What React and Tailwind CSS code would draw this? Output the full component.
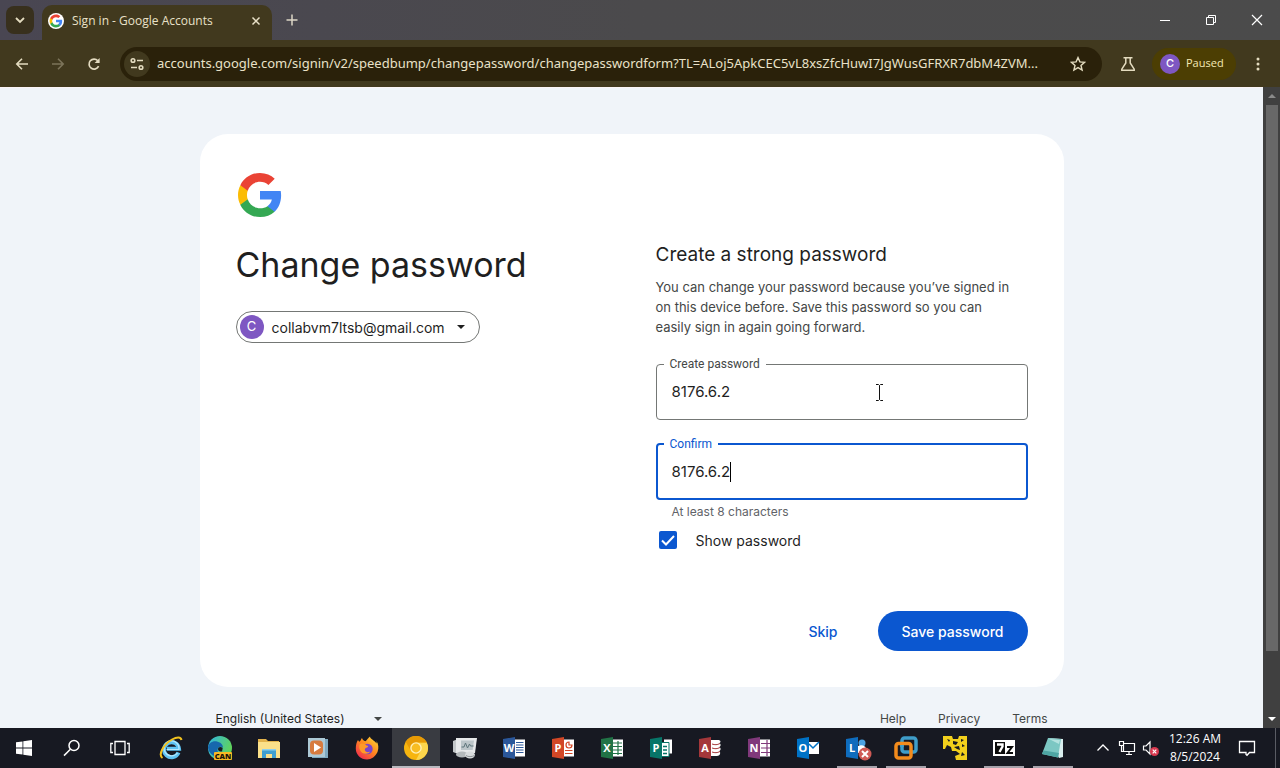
import React from "react";

const ui = "font-['Open_Sans','Noto_Sans',sans-serif]";

function GoogleG({ className }) {
  return (
    <svg viewBox="0 0 24 24" className={className} aria-hidden="true">
      <path fill="#4285F4" d="M22.56 12.25c0-.78-.07-1.53-.2-2.25H12v4.26h5.92c-.26 1.37-1.04 2.53-2.21 3.31v2.77h3.57c2.08-1.92 3.28-4.74 3.28-8.09z" />
      <path fill="#34A853" d="M12 23c2.97 0 5.46-.98 7.28-2.66l-3.57-2.77c-.98.66-2.23 1.06-3.71 1.06-2.86 0-5.29-1.93-6.16-4.53H2.18v2.84C3.99 20.53 7.7 23 12 23z" />
      <path fill="#FBBC05" d="M5.84 14.09c-.22-.66-.35-1.36-.35-2.09s.13-1.43.35-2.09V7.07H2.18C1.43 8.55 1 10.22 1 12s.43 3.45 1.18 4.93l2.85-2.22.81-.62z" />
      <path fill="#EA4335" d="M12 5.38c1.62 0 3.06.56 4.21 1.64l3.15-3.15C17.45 2.09 14.97 1 12 1 7.7 1 3.99 3.47 2.18 7.07l3.66 2.84c.87-2.6 3.3-4.53 6.16-4.53z" />
    </svg>
  );
}

function Line({ size, children, className = "", width = 1.5, label }) {
  return (
    <svg
      viewBox={`0 0 ${size} ${size}`}
      width={size}
      height={size}
      fill="none"
      stroke="currentColor"
      strokeWidth={width}
      className={`shrink-0 ${className}`}
      aria-label={label}
    >
      {children}
    </svg>
  );
}

function TabStrip() {
  return (
    <header className="flex h-10 shrink-0 items-end bg-linear-to-r from-[#494652] via-[#4b4a4c] to-[#4b4b4b]">
      <button aria-label="Search tabs" className="mb-1.5 ml-1.5 flex size-7 items-center justify-center rounded-lg bg-[#38301d] text-[#e4dcc0]">
        <Line size={12} width={1.8}><path d="M2 4l4 4 4-4" /></Line>
      </button>
      <div className="relative ml-2 flex h-[35px] w-[230px] items-center rounded-t-[10px] bg-[#41391e] pb-1 text-[#e9e1c8]">
        <span className="ml-1.5 flex size-4 items-center justify-center rounded-full bg-white">
          <GoogleG className="size-3.5" />
        </span>
        <span className={`ml-2 grow truncate text-[12px] ${ui}`}>Sign in - Google Accounts</span>
        <button aria-label="Close tab" className="mr-2.5">
          <Line size={12}><path d="M2.5 2.5l7 7M9.5 2.5l-7 7" /></Line>
        </button>
      </div>
      <button aria-label="New tab" className="mb-3.5 ml-3.5 text-[#ddd6c6]">
        <Line size={12}><path d="M6 .5v11M.5 6h11" /></Line>
      </button>
      <div className="ml-auto flex self-stretch text-white">
        <button aria-label="Minimize" className="flex w-[46px] items-center justify-center">
          <Line size={12} width={1}><path d="M1 6.5h10" /></Line>
        </button>
        <button aria-label="Restore" className="flex w-[46px] items-center justify-center">
          <Line size={12} width={1}><path d="M1.5 3.5h7v7h-7zM3.5 3.5v-2h7v7h-2" /></Line>
        </button>
        <button aria-label="Close" className="flex w-[46px] items-center justify-center">
          <Line size={12} width={1.2}><path d="M1 1l10 10M11 1L1 11" /></Line>
        </button>
      </div>
    </header>
  );
}

function Toolbar() {
  return (
    <nav className={`flex h-[47px] shrink-0 items-center bg-[#41391e] text-[#e4dcc0] ${ui}`}>
      <button aria-label="Back" className="ml-3.5">
        <Line size={16} width={1.6}><path d="M14 8H3M8 2.8L2.8 8 8 13.2" /></Line>
      </button>
      <button aria-label="Forward" className="ml-5 text-[#7c745a]">
        <Line size={16} width={1.6}><path d="M2 8h11M8 2.8L13.2 8 8 13.2" /></Line>
      </button>
      <button aria-label="Reload" className="ml-5">
        <Line size={16} width={1.7}>
          <path d="M12.6 10.2A5 5 0 1 1 11.8 4.7" />
          <path d="M13.6 2v5H8.6z" fill="currentColor" stroke="none" />
        </Line>
      </button>
      <div className="ml-4.5 flex h-[34px] min-w-0 grow items-center rounded-full bg-[#2a210a]">
        <button aria-label="View site information" className="ml-1 flex size-[26px] shrink-0 items-center justify-center rounded-full bg-[#41391e]">
          <Line size={16} width={1.6}>
            <circle cx="4" cy="4.5" r="1.8" />
            <path d="M8 4.5h6M2 11.5h6" />
            <circle cx="12" cy="11.5" r="1.8" />
          </Line>
        </button>
        <input
          aria-label="Address"
          readOnly
          className="ml-[7px] min-w-0 grow bg-transparent font-['Noto_Sans',sans-serif] text-[13px] text-[#e9e1c8] outline-none"
          value="accounts.google.com/signin/v2/speedbump/changepassword/changepasswordform?TL=ALoj5ApkCEC5vL8xsZfcHuwI7JgWusGFRXR7dbM4ZVM..."
        />
        <button aria-label="Bookmark" className="mr-4 ml-2">
          <Line size={16} width={1.4}><path d="M8 1.6l1.9 4.3 4.7.4-3.6 3.1 1.1 4.6L8 11.6 3.9 14 5 9.4 1.4 6.3l4.7-.4z" /></Line>
        </button>
      </div>
      <button aria-label="Chrome Labs" className="ml-4.5">
        <Line size={16} width={1.5}><path d="M3.5 1.8h9M5.8 2v5L1.8 13.2v1h12.4v-1L10.2 7V2" /></Line>
      </button>
      <button className="ml-4 flex h-8 w-[84px] shrink-0 items-center gap-1.5 rounded-full bg-[#4c3e03] pl-2 text-[11px] font-medium text-[#f4e9b4]">
        <span className="flex size-5 items-center justify-center rounded-full bg-[#7e57c2] font-['Inter',sans-serif] text-[11px] text-white">C</span>
        Paused
      </button>
      <button aria-label="Menu" className="mr-3.5 ml-3.5">
        <Line size={16} width={0}>
          <g fill="currentColor">
            <circle cx="8" cy="3" r="1.5" /><circle cx="8" cy="8" r="1.5" /><circle cx="8" cy="13" r="1.5" />
          </g>
        </Line>
      </button>
    </nav>
  );
}

function Caret({ className }) {
  return (
    <svg viewBox="0 0 8 4" className={`h-1 w-2 shrink-0 ${className}`} fill="currentColor" aria-hidden="true">
      <path d="M0 0h8L4 4z" />
    </svg>
  );
}

function Field({ id, label, focused, children }) {
  return (
    <fieldset
      className={
        focused
          ? "relative h-16 rounded-sm border-2 border-[#0b57d0] px-3.5"
          : "relative h-16 rounded-sm border border-[#747775] px-[15px]"
      }
    >
      <legend className={focused ? "-ml-2 h-4 px-1.5 text-[#0b57d0]" : "-ml-2 h-4 px-1.5 text-[#444746]"}>
        <label htmlFor={id} className="block font-['Roboto',sans-serif] text-[12px] leading-4">{label}</label>
      </legend>
      <input
        id={id}
        type="text"
        defaultValue="8176.6.2"
        className="block h-[38px] w-full bg-transparent text-[15px] text-[#1f1f1f] outline-none"
      />
      {children}
    </fieldset>
  );
}

function SignInCard() {
  return (
    <section className="flex min-h-[553px] w-full flex-col rounded-[28px] bg-white p-9 pt-[37px]">
      <GoogleG className="size-12" />
      <div className="mt-6 grid grow grid-cols-2 gap-12">
        <div>
          <h1 className="text-[34px] leading-11 text-[#1f1f1f]">Change password</h1>
          <button className="mt-6 flex h-8 items-center rounded-full border border-[#747775] pr-3.5 pl-[3px] text-[14px] text-[#1f1f1f]">
            <span className="flex size-6 items-center justify-center rounded-full bg-[#7e57c2] text-[13px] text-white">C</span>
            <span className="ml-2">collabvm7ltsb@gmail.com</span>
            <Caret className="ml-3" />
          </button>
        </div>
        <form className="flex flex-col" onSubmit={(e) => e.preventDefault()}>
          <h2 className="text-[19px] leading-6 text-[#1f1f1f]">Create a strong password</h2>
          <p className="mt-2.5 pr-4 text-[13px] leading-5 text-[#444746]">
            You can change your password because you’ve signed in on this device before. Save this password so you can easily sign in again going forward.
          </p>
          <div className="mt-[19px] flex flex-col gap-4">
            <Field id="create" label="Create password">
              <svg viewBox="0 0 9 17" className="absolute top-3 left-[218px] h-[17px] w-[9px]" fill="none" stroke="#111" aria-hidden="true">
                <path d="M1 .5h2.5l1 1 1-1H8M4.500 1.500v14M1 16.500h2.500l1-1 1 1H8" />
              </svg>
            </Field>
            <Field id="confirm" label="Confirm" focused>
              <span className="absolute top-2.5 left-[72px] h-5 w-px bg-black" />
            </Field>
          </div>
          <p className="mt-1 ml-4 text-[12px] leading-4 text-[#5f6368]">At least 8 characters</p>
          <label className="mt-2.5 ml-[3px] flex h-5 items-center gap-[19px] text-[14px] text-[#1f1f1f]">
            <span className="relative flex size-[18px]">
              <input type="checkbox" defaultChecked className="size-[18px] appearance-none rounded-xs bg-[#0b57d0]" />
              <svg viewBox="0 0 18 18" className="absolute inset-0" fill="none" stroke="white" strokeWidth="2" aria-hidden="true">
                <path d="M3 9.500l4 4 8-8.500" />
              </svg>
            </span>
            Show password
          </label>
          <div className="mt-auto flex justify-end gap-4 text-[14px] font-medium">
            <button type="button" className="h-10 px-6 text-[#0b57d0]">Skip</button>
            <button type="submit" className="h-10 rounded-full bg-[#0b57d0] px-6 text-white">Save password</button>
          </div>
        </form>
      </div>
    </section>
  );
}

function PageFooter() {
  return (
    <footer className="mt-6 flex items-center justify-between px-4 text-[12px] leading-4 text-[#444746]">
      <div className="relative flex items-center">
        <select aria-label="Language" className="w-[168px] appearance-none bg-transparent text-[#1f1f1f]">
          <option>English (United States)</option>
        </select>
        <Caret className="absolute right-0.5" />
      </div>
      <div className="flex gap-8">
        <a href="#help">Help</a>
        <a href="#privacy">Privacy</a>
        <a href="#terms">Terms</a>
      </div>
    </footer>
  );
}

function OfficeIcon({ color, letter, children }) {
  return (
    <svg viewBox="0 0 24 24" className="size-6" aria-hidden="true">
      {children}
      <path fill={color} d="M1 3L13 1v22L1 21z" />
      <text x="7" y="16" textAnchor="middle" fontSize="11" fontWeight="700" fill="white" fontFamily="Open Sans, sans-serif">{letter}</text>
    </svg>
  );
}

const page = (color, d) => (
  <>
    <path fill="white" d="M12 3.500h11v17H12z" />
    <path stroke={color} strokeWidth="1.200" fill="none" d={d} />
  </>
);

const apps = [
  {
    name: "Internet Explorer",
    icon: (
      <svg viewBox="0 0 24 24" className="size-6" fill="none">
        <path d="M19.500 16.500A7.500 7.500 0 1 1 20 12.800H8" stroke="#5ec3f2" strokeWidth="4" />
        <path d="M18.500 17A7.500 7.500 0 1 1 20 13.500H7.500" stroke="#b5e8fc" strokeWidth="1.200" />
        <path d="M3.500 22C-1 19 4 8.500 13 3.500 18 .8 22 .8 22.500 4" stroke="#f2c21f" strokeWidth="2" />
      </svg>
    ),
  },
  {
    name: "Edge Canary",
    icon: (
      <svg viewBox="0 0 24 24" className="size-6">
        <defs>
          <linearGradient id="edge" x1="0" y1="0" x2="1" y2="0.400">
            <stop offset="0" stopColor="#2fb4e6" /><stop offset="1" stopColor="#5fd35c" />
          </linearGradient>
        </defs>
        <circle cx="12" cy="12" r="12" fill="url(#edge)" />
        <path fill="#1767ad" d="M0 12c0-5 5-7.500 9-6.500 4 .8 6 3.500 6 6.500-2-2.500-5.500-1-5.500 2 0 4 5 6 9 5.500A12 12 0 0 1 0 12z" />
        <path fill="#171921" d="M10 13c0-2 3-3 4.500-1 .7 1-.8 2-.2 3.200-2.500 1-4.300-.4-4.300-2.200z" />
        <rect x="6" y="16" width="18" height="8" rx="1" fill="#f7b924" />
        <text x="15" y="22.700" textAnchor="middle" fontSize="7.500" fontWeight="800" fill="#1b1408" fontFamily="Open Sans, sans-serif">CAN</text>
      </svg>
    ),
  },
  {
    name: "File Explorer",
    icon: (
      <svg viewBox="0 0 24 24" className="size-6">
        <path fill="#e3b34c" d="M1 3h8l2 2h11v5H1z" />
        <path fill="#fbe08a" d="M1 6h22v16H1z" />
        <path fill="#3f9fd0" d="M5 13h14v9h-4v-4H9v4H5z" />
        <path fill="#8fd0ee" d="M5 13h14v1.500H5z" />
      </svg>
    ),
  },
  {
    name: "Media Player",
    icon: (
      <svg viewBox="0 0 24 24" className="size-6">
        <path fill="#7fa9c0" d="M6 3h16v19H6z" />
        <path fill="#adc9d6" d="M2 2h17v19H2z" />
        <rect x="4" y="4.500" width="13" height="14" rx="4" fill="#d77b3f" />
        <path fill="white" d="M8 7l7 4.500L8 16z" />
      </svg>
    ),
  },
  {
    name: "Firefox",
    icon: (
      <svg viewBox="0 0 24 24" className="size-6">
        <defs>
          <linearGradient id="fox" x1="1" y1="0" x2="0.200" y2="1">
            <stop offset="0" stopColor="#ffe23b" /><stop offset="0.500" stopColor="#ff8a1f" /><stop offset="1" stopColor="#f0294f" />
          </linearGradient>
        </defs>
        <path fill="url(#fox)" d="M3 4c.5 1 1 1.500 1.500 1.800C6 4.500 6 3 7 2c.3 1.500 1.500 3 3.500 3.200C12 4 13 2 15 .5c0 2.500 5 4 6.500 7 .3-1 .2-1.800 0-2.500 2 3 2.500 7 1 11C20.500 20.500 16.500 23.500 12 23.500 6 23.500.8 19 .8 12.800.8 9 1.500 6 3 4z" />
        <circle cx="12.500" cy="13" r="5.200" fill="#7b45c9" />
        <path fill="#ff9a28" d="M5 8c3-1 5 0 6.500 1.500 2 0 2 1.500.5 2-2 .7-2.500 1.500-2 3 1 2 3.500 2 5 1-1 3-8 3.500-10-1.500C4 12 4 10 5 8z" />
      </svg>
    ),
  },
  {
    name: "Chrome Canary",
    active: true,
    icon: (
      <svg viewBox="0 0 24 24" className="size-6">
        <circle cx="12" cy="12" r="12" fill="#f7b50f" />
        <path fill="#fdd64c" d="M12 6.500h10.700A12 12 0 0 1 12 24l4.800-9.300z" />
        <path fill="#e79a05" d="M12 6.500h10.700A12 12 0 0 0 1.700 5.800L7 15z" />
        <circle cx="12" cy="12" r="5.800" fill="#fff0b5" />
        <circle cx="12" cy="12" r="4.400" fill="#f8bd22" />
      </svg>
    ),
  },
  {
    name: "System monitor",
    icon: (
      <svg viewBox="0 0 24 24" className="size-6">
        <path fill="#c2c6c9" d="M0 5l5-2v15l-5-2z" />
        <path fill="#e6e8ea" d="M3 2h21l-2 15H3z" />
        <path fill="#bcc5c9" d="M8 4.500h13l-1.300 9.500H8z" />
        <path fill="none" stroke="#5f767c" d="M8.500 11H11l1.500-4 2 5 2-4 1 2h3" />
        <ellipse cx="9" cy="18.500" rx="6" ry="3" fill="#b4b9bc" />
        <ellipse cx="17" cy="19" rx="5" ry="3.500" fill="#d8dbdd" />
        <path stroke="#8c9296" strokeWidth="1" fill="none" d="M13 19.500c2 1.500 6 1.500 8.500 0" />
      </svg>
    ),
  },
  { name: "Word", icon: <OfficeIcon color="#2b579a" letter="W">{page("#2b579a", "M14 6.500h7.500M14 9h7.500M14 11.500h7.500M14 14h7.500M14 16.500h7.500")}</OfficeIcon> },
  { name: "PowerPoint", icon: <OfficeIcon color="#d24726" letter="P">{page("#d24726", "M18 6a3 3 0 1 0 3 3h-3zM14 14.500h7.500M14 17.500h7.500")}</OfficeIcon> },
  { name: "Excel", icon: <OfficeIcon color="#217346" letter="X">{page("#217346", "M13 7h9M13 10.500h9M13 14h9M13 17.500h9M18 5v14")}</OfficeIcon> },
  {
    name: "Publisher",
    icon: (
      <OfficeIcon color="#077568" letter="P">
        <path fill="white" d="M15 3.500h8v14h-8z" />
        <path fill="white" stroke="#077568" d="M12 6.500h8v14h-8z" />
        <path stroke="#077568" strokeWidth="1.500" d="M14 10.500h4M14 14h4M14 17.500h4" />
      </OfficeIcon>
    ),
  },
  {
    name: "Access",
    icon: (
      <OfficeIcon color="#a4373a" letter="A">
        <path fill="white" d="M12 4h8c3 0 3 2.500 1.500 3 1.500 1 1.500 3 0 4 1.500 1 1.500 3 0 4 1.500 2 .5 5-2.500 5h-7z" />
        <path stroke="#a4373a" d="M14 8c3 1 5 1 8-.5M14 12c3 1 5 1 8-.5M14 16c3 1 5 1 8-.5" fill="none" />
      </OfficeIcon>
    ),
  },
  { name: "OneNote", icon: <OfficeIcon color="#80397b" letter="N">{page("#80397b", "M20 4v16M14 7.500h9M14 12h9M14 16.500h9")}</OfficeIcon> },
  {
    name: "Outlook",
    icon: (
      <OfficeIcon color="#0072c6" letter="O">
        <path fill="white" d="M12 6h11v12H12z" />
        <path stroke="#0072c6" strokeWidth="1.500" fill="none" d="M13 8l4 4 6-6" />
      </OfficeIcon>
    ),
  },
  {
    name: "Lync",
    running: true,
    badge: true,
    icon: (
      <OfficeIcon color="#0f6cbd" letter="L">
        <circle cx="17" cy="7" r="3.500" fill="#4ba3e3" />
        <path fill="white" d="M13 10c4-2 8 0 8.500 4v3H13z" />
      </OfficeIcon>
    ),
  },
  {
    name: "VMware",
    running: true,
    icon: (
      <svg viewBox="0 0 24 24" className="size-6" fill="none" strokeWidth="3.500">
        <rect x="8" y="2" width="14" height="14" rx="2.500" stroke="#3f9dc9" />
        <rect x="2" y="7.500" width="15" height="14.500" rx="2.500" stroke="#f38b1c" />
        <path d="M8 11V9" stroke="#3f9dc9" />
      </svg>
    ),
  },
  {
    name: "Network tool",
    icon: (
      <svg viewBox="0 0 24 24" className="size-6">
        <path fill="#f3d01c" d="M0 0h9l1 3h5l1-3h8v24H13l-1-4 5-2-4-3H9l-1-4-4-2-2 4H0z" />
        <path fill="#171921" d="M4 3l3 1-1 2zM10 5l5 1-2 3-3-1zM11 11l5-1 1 4-3-1zM19 8l3 2-3 1zM19 16l3 3-4 1zM18 3l3 1-3 2z" />
      </svg>
    ),
  },
  {
    name: "7-Zip",
    running: true,
    icon: (
      <svg viewBox="0 0 24 24" className="size-6">
        <path fill="white" d="M1 4h22v16H1z" />
        <path fill="#0b0b0b" d="M3 6h10v12H3z" />
        <path fill="none" stroke="white" strokeWidth="2.400" d="M5 8.500h5.500v2L7.500 16" />
        <path fill="none" stroke="#0b0b0b" strokeWidth="2" d="M15 11h5l-4.500 6h5.500" />
      </svg>
    ),
  },
  {
    name: "Notepad",
    running: true,
    icon: (
      <svg viewBox="0 0 24 24" className="size-6">
        <path fill="#d9eeee" d="M7 2l15 1v18l-4 1z" />
        <path fill="#7cc7c3" d="M7 2l13 1-3 18.500L1 18z" />
        <path fill="#4ea5a3" d="M2.500 14.500L18 17l-1 4.500L1 18z" />
        <path fill="#b3e2df" d="M8 3l11 1-1 4z" />
      </svg>
    ),
  },
];

function Taskbar() {
  return (
    <footer className={`flex h-10 shrink-0 bg-[#171922] text-white ${ui}`}>
      <button aria-label="Start" className="flex w-12 items-center justify-center">
        <svg viewBox="0 0 16 16" className="size-4" fill="white">
          <path d="M0 2.300L6.500 1.400v6.200H0zM7.300 1.300L16 0v7.600H7.300zM0 8.400h6.500v6.200L0 13.700zM7.300 8.400H16V16l-8.700-1.300z" />
        </svg>
      </button>
      <button aria-label="Search" className="flex w-12 items-center justify-center">
        <Line size={18} width={1.5}><circle cx="11" cy="6.500" r="5" /><path d="M7.400 10.200L1 16.600" /></Line>
      </button>
      <button aria-label="Task view" className="flex w-12 items-center justify-center">
        <Line size={20} width={1.3}><path d="M5 3.500h10v13H5zM3 5.500H.8v9H3M17 5.500h2.200v9H17" /></Line>
      </button>
      <div className="ml-[3px] flex gap-px">
        {apps.map((a) => (
          <button
            key={a.name}
            aria-label={a.name}
            className={a.active ? "relative flex w-12 items-center justify-center bg-[#393b41]" : "relative flex w-12 items-center justify-center"}
          >
            {a.icon}
            {a.badge && (
              <svg viewBox="0 0 14 14" className="absolute right-[9px] bottom-[7px] size-3.5" aria-hidden="true">
                <circle cx="7" cy="7" r="6.500" fill="#cf5a55" />
                <path d="M4 4l6 6M10 4l-6 6" stroke="white" strokeWidth="2" />
              </svg>
            )}
            {a.active && <span className="absolute inset-x-0 bottom-0 h-0.5 bg-[#b9b9bf]" />}
            {a.running && <span className="absolute inset-x-1 bottom-0 h-0.5 bg-[#a5a2ab]" />}
          </button>
        ))}
      </div>
      <div className="ml-auto flex items-center">
        <button aria-label="Show hidden icons">
          <Line size={14} width={1.3}><path d="M1.500 9.500L7 4l5.500 5.500" /></Line>
        </button>
        <button aria-label="Network" className="ml-2">
          <Line size={18} width={1.2}><path d="M5.500 4.500h11v8h-11zM8 15.500h6M11 12.500v3M1.500 2.500h4v4h-4zM3.500 6.500v6h2" /></Line>
        </button>
        <button aria-label="Volume muted" className="ml-1.5">
          <Line size={18} width={1.2}>
            <path d="M1.500 7h2.500l4-4v12l-4-4H1.500z" />
            <circle cx="12.500" cy="12.500" r="4.500" fill="#d8384f" stroke="none" />
            <path d="M10.700 10.700l3.600 3.600M14.300 10.700l-3.600 3.600" />
          </Line>
        </button>
        <div className="ml-0.5 w-[66px] text-center text-[12px] leading-[18px]">
          <div>12:26 AM</div>
          <div>8/5/2024</div>
        </div>
        <button aria-label="Notifications" className="ml-2.5">
          <Line size={18} width={1.3}><path d="M1.500 2.500h15v11h-5L9 16.300 8 15.500v-2H1.500z" /></Line>
        </button>
        <span className="mr-1 ml-[19px] h-10 w-px bg-[#5a5c64]" />
      </div>
    </footer>
  );
}

export default function App() {
  return (
    <div className="flex h-screen flex-col overflow-hidden font-['Inter',sans-serif]">
      <TabStrip />
      <Toolbar />
      <div className="flex min-h-0 grow">
        <main className="flex min-w-0 grow justify-center overflow-hidden border-t border-[#fbf4f6] bg-[#f0f4f9] pt-[46px]">
          <div className="w-full max-w-[864px]">
            <SignInCard />
            <PageFooter />
          </div>
        </main>
        <div className="flex w-[17px] shrink-0 flex-col items-center bg-[#404040] text-white" aria-hidden="true">
          <Caret className="my-[7px] rotate-180 text-[#8a8a8a]" />
          <span className="w-3 grow bg-[#686868]" />
          <Caret className="mt-[66px] mb-[7px]" />
        </div>
      </div>
      <Taskbar />
    </div>
  );
}
